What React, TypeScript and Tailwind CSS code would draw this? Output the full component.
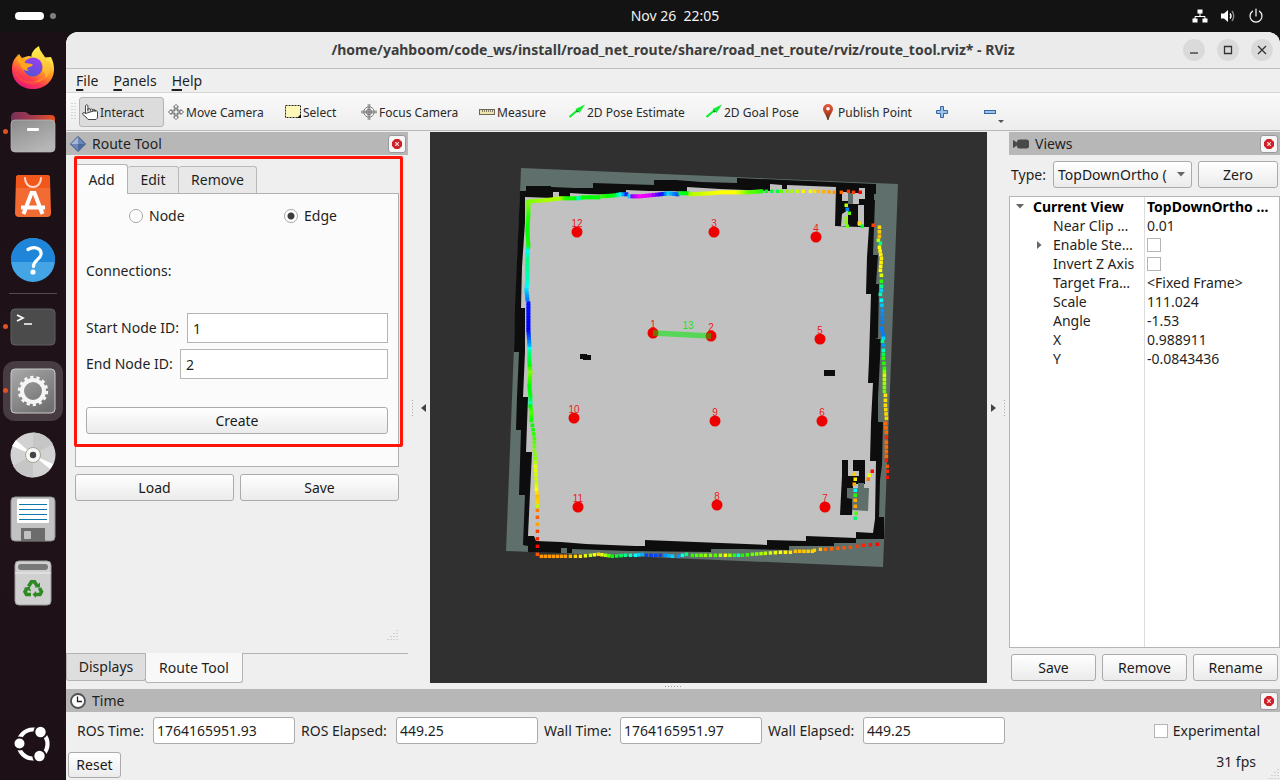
import React, { useState } from "react";

const btn =
  "rounded-[3px] border border-[#ababab] bg-gradient-to-b from-white to-[#ebebeb] text-center text-[#1a1a1a] active:from-[#ddd]";

/* ---------- Map data ---------- */

type Anchor = [number, number, number];

const scans: { step: number; size: number; pts: Anchor[] }[] = [
  {
    step: 3,
    size: 4,
    pts: [
      [528, 202, 100], [530, 201, 90], [545, 200, 80], [560, 198, 80], [565, 198, 110], [575, 198, 120], [578, 198, 170],
      [583, 197, 120], [598, 197, 120], [602, 196, 110], [615, 195, 130], [620, 194, 175], [626, 194, 230], [629, 196, 190],
      [632, 196, 275], [640, 196, 300], [650, 195, 290], [660, 194, 250], [668, 193, 190], [677, 194, 220], [680, 193, 130],
      [687, 193, 120], [690, 194, 80], [710, 193, 65], [720, 192, 60], [735, 192, 60], [748, 192, 95], [761, 191, 110],
    ],
  },
  {
    step: 5,
    size: 3.4,
    pts: [
      [766, 191, 130], [777, 191, 135], [781, 191, 95], [797, 191, 75], [803, 191, 58], [810, 191, 62], [818, 191, 45],
      [834, 192, 35], [841, 192, 25], [848, 191, 12], [853, 192, 14],
    ],
  },
  {
    step: 3,
    size: 4,
    pts: [
      [528, 203, 90], [528, 215, 110], [527, 230, 120], [528, 246, 115], [527, 251, 180], [527, 260, 150], [527, 280, 165],
      [526, 290, 190], [527, 299, 210], [528, 303, 235], [528, 330, 240], [529, 345, 200], [529, 352, 150], [529, 362, 130],
      [530, 372, 90], [529, 386, 120], [530, 396, 125], [530, 403, 160], [530, 406, 120], [531, 412, 100], [531, 420, 115],
    ],
  },
  {
    step: 4,
    size: 3.6,
    pts: [
      [532, 425, 120], [534, 438, 105], [534, 450, 90], [535, 458, 90], [535, 466, 65], [536, 482, 75], [536, 489, 60],
      [537, 496, 45], [537, 502, 50], [537, 506, 75],
    ],
  },
  {
    step: 7,
    size: 3.4,
    pts: [[537, 510, 30], [537, 517, 22], [537, 524, 38], [537, 531, 15], [537, 546, 2], [537, 554, 20]],
  },
  {
    step: 4.3,
    size: 3.5,
    pts: [
      [541, 556, 35], [565, 556, 38], [580, 556, 55], [590, 555, 75], [598, 554, 50], [605, 555, 80], [612, 556, 120],
      [625, 555, 155], [635, 555, 180], [642, 554, 200], [646, 555, 225], [660, 555, 225], [665, 555, 205], [672, 556, 190],
      [678, 556, 205], [686, 554, 150], [692, 555, 110], [705, 555, 85], [715, 555, 100], [725, 555, 60], [734, 555, 110],
      [738, 555, 170], [742, 555, 115], [752, 554, 95], [765, 553, 75], [780, 552, 60], [790, 552, 55], [795, 551, 45],
      [812, 551, 50],
    ],
  },
  {
    step: 6,
    size: 3.4,
    pts: [[814, 550, 48], [820, 549, 45], [825, 549, 25], [850, 547, 18], [863, 545, 8], [877, 544, 0]],
  },
  {
    step: 4.1,
    size: 3.6,
    pts: [
      [879, 227, 52], [879, 236, 45], [878, 240, 75], [880, 243, 150], [879, 247, 60], [881, 258, 55], [880, 270, 60],
      [881, 275, 70], [881, 281, 110], [881, 286, 150], [881, 290, 190], [880, 294, 165], [881, 300, 180], [882, 310, 205],
      [882, 322, 210], [881, 328, 210], [883, 335, 210], [883, 338, 190], [882, 341, 150], [883, 345, 205], [883, 350, 165],
      [883, 358, 110], [884, 368, 110], [884, 375, 70], [884, 391, 95], [885, 395, 55], [885, 405, 52], [886, 418, 50],
      [885, 423, 25], [886, 432, 25], [886, 437, 8], [886, 442, 25], [886, 456, 25],
    ],
  },
  { step: 6, size: 3.4, pts: [[886, 460, 6], [887, 466, 20], [887, 471, 10], [887, 477, 4]] },
];

const looseDots: Anchor[] = [
  [860, 192, 0], [846, 205, 75], [847, 209, 208], [849, 213, 100], [846, 218, 85], [846, 222, 90], [847, 226, 95],
  [859, 223, 52], [862, 226, 130], [873, 225, 15], [854, 474, 48], [855, 479, 55], [854, 484, 42], [855, 490, 180],
  [855, 495, 110], [855, 500, 42], [855, 506, 38], [856, 513, 105], [855, 518, 145], [872, 471, 2], [869, 475, 65],
  [868, 479, 28],
];

function sample(pts: Anchor[], step: number): Anchor[] {
  const out: Anchor[] = [];
  for (let i = 0; i < pts.length - 1; i++) {
    const [x0, y0, h0] = pts[i];
    const [x1, y1, h1] = pts[i + 1];
    const n = Math.max(1, Math.round(Math.hypot(x1 - x0, y1 - y0) / step));
    for (let k = 0; k < n; k++) {
      const t = k / n;
      out.push([x0 + (x1 - x0) * t, y0 + (y1 - y0) * t, h0 + (h1 - h0) * t]);
    }
  }
  out.push(pts[pts.length - 1]);
  return out;
}

const nodes = [
  { id: 12, x: 577, y: 232 }, { id: 3, x: 714, y: 232 }, { id: 4, x: 816, y: 237 }, { id: 1, x: 653, y: 333 },
  { id: 2, x: 711, y: 336 }, { id: 5, x: 820, y: 339 }, { id: 10, x: 574, y: 418 }, { id: 9, x: 715, y: 421 },
  { id: 6, x: 822, y: 421 }, { id: 11, x: 578, y: 507 }, { id: 8, x: 717, y: 505 }, { id: 7, x: 825, y: 507 },
];

function MapView() {
  return (
    <svg viewBox="430 132 557 551" className="min-h-0 w-full flex-1" role="img" aria-label="Map">
      <polygon points="521,168 898,184 883,567 506,551" fill="#5f6f6c" />
      <polygon
        fill="#0d0d0d"
        points="520,191 526,191 526,186 551,186 551,187 575,188 593,188 593,183 623,184 654,185 654,180 676,180 701,182 737,183 737,178 876,184 876,194 870,194 870,200 875,200 873,255 873,255 878,255 876,284 879,284 878,338 875,339 881,339 880,358 878,397 878,422 883,422 882,465 880,480 879,517 884,517 884,539 856,539 856,543 834,543 834,546 789,546 789,550 742,549 711,549 711,552 630,551 572,549 572,553 567,553 567,548 561,548 561,553 528,552 528,546 523,545 525,495 519,495 521,430 516,430 517,397 519,352 514,352 515,307"
      />
      <polygon
        fill="#c1c1c1"
        points="525,197 553,198 553,192 559,192 559,197 570,198 570,193 586,194 626,195 626,190 649,191 672,191 687,192 687,187 720,189 745,190 770,191 770,184 782,185 782,189 787,189 787,185 836,187 836,226 869,227 867,257 866,294 871,294 869,360 868,383 873,383 871,422 870,461 876,461 875,519 873,533 856,532 856,538 806,536 806,541 767,540 767,545 746,544 645,540 645,546 635,546 586,544 561,542 536,541 534,536 528,536 530,493 532,452 526,452 528,397 523,397 525,352 525,308 521,308 522,267 525,222"
      />
      <g fill="#0d0d0d">
        <polygon points="836,187 865,187 865,191 874,191 874,227 835,226" />
        <rect x="580" y="354" width="7" height="5" />
        <rect x="583" y="355" width="8" height="5" />
        <rect x="824" y="370" width="11" height="6" />
        <rect x="842" y="460" width="6" height="17" />
        <polygon points="842,476 853,476 853,500 852,515 840,515" />
        <rect x="853" y="460" width="12" height="24" />
      </g>
      <g fill="#c1c1c1">
        <rect x="842" y="192" width="6" height="9" />
        <rect x="848" y="200" width="5" height="4" />
        <rect x="853" y="193" width="6" height="11" />
        <rect x="859" y="188" width="6" height="11" />
        <polygon points="842,214 848,210 848,226 841,226" />
        <rect x="858" y="205" width="6" height="21" />
      </g>
      <rect x="848" y="193" width="5" height="11" fill="#5f6f6c" />
      <polygon points="847,488 858,488 858,483 864,483 864,488 869,488 868,511 852,510 852,499 847,498" fill="#5f6f6c" />
      <rect x="848" y="471" width="11" height="5" fill="#c1c1c1" />
      <path d="M848 460h5v11h-5z" fill="#c1c1c1" />
      {scans.map((s, i) => (
        <g key={i}>
          {sample(s.pts, s.step).map(([x, y, h], k) => (
            <rect key={k} x={x - s.size / 2 + 0.4} y={y - s.size / 2 + 0.3} width={s.size} height={s.size} fill={`hsl(${h} 100% 50%)`} />
          ))}
        </g>
      ))}
      {looseDots.map(([x, y, h], k) => (
        <rect key={k} x={x - 1.5} y={y - 1.5} width="3.500" height="3.500" fill={`hsl(${h} 100% 50%)`} />
      ))}
      {nodes.map((n) => (
        <circle key={n.id} cx={n.x} cy={n.y} r="5.500" fill="#ee0000" />
      ))}
      <line x1="653" y1="333" x2="711" y2="336" stroke="#10e610" strokeOpacity="0.6" strokeWidth="5.500" />
      <path d="M653 330.500h4.500v5.500h-4.500zM706 333h5v5.500h-5z" fill="#7a6a00" />
      <g className="font-['Liberation_Sans',sans-serif] text-[10px]" textAnchor="middle">
        {nodes.map((n) => (
          <text key={n.id} x={n.x} y={n.y - 5} fill="#f01818">
            {n.id}
          </text>
        ))}
        <text x="688" y="329" fill="#14e614">13</text>
      </g>
    </svg>
  );
}

/* ---------- Dock icons ---------- */

const Firefox = () => (
  <svg viewBox="0 0 44 46" className="h-[46px] w-11">
    <defs>
      <linearGradient id="ffa" x1="0.85" y1="0.05" x2="0.25" y2="1">
        <stop offset="0.1" stopColor="#ffe14a" />
        <stop offset="0.4" stopColor="#ff9a1f" />
        <stop offset="0.7" stopColor="#ff3d4f" />
        <stop offset="1" stopColor="#e5127c" />
      </linearGradient>
      <linearGradient id="ffb" x1="0.7" y1="0" x2="0.3" y2="1">
        <stop offset="0" stopColor="#9a3df0" />
        <stop offset="1" stopColor="#5255d4" />
      </linearGradient>
      <linearGradient id="ffc" x1="0.5" y1="0" x2="0.7" y2="1">
        <stop offset="0" stopColor="#fff04d" />
        <stop offset="1" stopColor="#ffa629" />
      </linearGradient>
    </defs>
    <path d="M8 9c1.500 2 2 3 3 4 3-1 5-2 7-2l8 2 14-1c2 4 3 8 3 12 0 12-9 20-21 20S1 36 1 24c0-6 2-10 5-13l1 3z" fill="url(#ffa)" />
    <path d="M28 1c-5 3-9 8-7 12 6-1 12 4 11 13 0 6-5 10-9 11 11 1 17-8 16-17 0-2-1-3-2-4l-1 2c-1-8-7-10-8-17z" fill="url(#ffc)" />
    <circle cx="22" cy="22" r="9.500" fill="url(#ffb)" />
    <path d="M7 9c2 4 5 5 9 5-3 1-3 3-2 4l7 1c2 0 0 3-3 3-3 1-2 3 0 4-5 0-8-3-9-7-3-3-4-6-2-10z" fill="#ffa51f" />
    <path d="M4 25c3 8 10 12 18 11 6-1 10-5 10-9 3 2 3 6 1 8-7 8-28 5-29-10z" fill="#ff5a30" opacity="0.550" />
  </svg>
);

const Files = () => (
  <svg viewBox="0 0 46 42" className="h-[42px] w-[46px]">
    <defs>
      <linearGradient id="fla" x1="0" x2="1">
        <stop offset="0" stopColor="#77305a" />
        <stop offset="0.500" stopColor="#a83a4d" />
        <stop offset="1" stopColor="#e95420" />
      </linearGradient>
      <linearGradient id="flb" x1="0" y1="0" x2="0.600" y2="1">
        <stop offset="0" stopColor="#8b8b8b" />
        <stop offset="1" stopColor="#b6b6b6" />
      </linearGradient>
    </defs>
    <path d="M1 6a5 5 0 0 1 5-5h9c2 0 3 3 6 3h20a4 4 0 0 1 4 4v10H1z" fill="url(#fla)" />
    <rect x="1" y="9" width="44" height="32" rx="4" fill="url(#flb)" stroke="#b9b9b9" strokeWidth="0.700" />
    <rect x="17" y="17" width="12" height="3" rx="1" fill="#fff" />
  </svg>
);

const Software = () => (
  <svg viewBox="0 0 36 42" className="h-[42px] w-9">
    <path d="M4 0h28a3 3 0 0 1 3 3l1 35a4 4 0 0 1-4 4H4a4 4 0 0 1-4-4L1 3a3 3 0 0 1 3-3z" fill="#f26b32" />
    <path d="M4 0h28a3 3 0 0 1 3 3v10H1V3a3 3 0 0 1 3-3z" fill="#f1571b" />
    <path d="M10 3c0 12 16 12 16 0" fill="none" stroke="#ffd9c8" strokeWidth="2" strokeLinecap="round" />
    <path d="M8.500 39l8-21h3l8 21M6 32.500h24" fill="none" stroke="#fff" strokeWidth="4" />
  </svg>
);

const Help = () => (
  <svg viewBox="0 0 44 44" className="size-11">
    <circle cx="22" cy="22" r="22" fill="#44a5e6" />
    <path d="M0 24a22 22 0 0 1 0-2 22 22 0 0 1 44 0v2z" fill="#1e85d9" />
    <path d="M17 11.500c6-3.500 14-1.500 13 5-1 5-7.500 6-7.500 12" fill="none" stroke="#fff" strokeWidth="3.200" strokeLinecap="round" />
    <circle cx="22" cy="34" r="2.600" fill="#fff" />
  </svg>
);

const Terminal = () => (
  <svg viewBox="0 0 46 38" className="h-[38px] w-[46px]">
    <rect x="1" y="1" width="44" height="36" rx="4" fill="#4b4b4b" stroke="#606060" />
    <path d="M7 7l6 3-6 3M14 16h8" fill="none" stroke="#fff" strokeWidth="1.700" />
  </svg>
);

const Settings = () => (
  <svg viewBox="0 0 46 46" className="size-[46px]">
    <defs>
      <linearGradient id="sta" x1="0" y1="0" x2="0.700" y2="1">
        <stop offset="0" stopColor="#aaaaaa" />
        <stop offset="1" stopColor="#707070" />
      </linearGradient>
    </defs>
    <rect x="1" y="1" width="44" height="44" rx="4" fill="url(#sta)" stroke="#c9c9c9" />
    <circle cx="23" cy="23" r="11" fill="none" stroke="#f5f5f5" strokeWidth="4" />
    <circle cx="23" cy="23" r="13.700" fill="none" stroke="#f5f5f5" strokeWidth="3" strokeDasharray="3.200 2.940" />
  </svg>
);

const Disc = () => (
  <svg viewBox="0 0 46 46" className="size-[46px]">
    <circle cx="23" cy="23" r="22.500" fill="#d2d2d2" />
    <path d="M23 23V.5A22.500 22.500 0 0 1 43 12zM23 23v22.500A22.500 22.500 0 0 1 3 34z" fill="#c6c6c6" />
    <path d="M23 23L2 14l4-6zM23 23l17 14 3-5z" fill="#fff" />
    <circle cx="23" cy="23" r="7.500" fill="#f7f7f7" stroke="#aaa28f" />
    <circle cx="23" cy="23" r="3.200" fill="#444" />
  </svg>
);

const Floppy = () => (
  <svg viewBox="0 0 46 46" className="size-[46px]">
    <rect x="1" y="1" width="44" height="44" rx="4" fill="#c2c2c2" stroke="#8f8f8f" />
    <rect x="7" y="3" width="32" height="24" rx="1" fill="#fff" />
    <path d="M9 8.500h28M9 13.500h28M9 18.500h28M9 23.500h28" stroke="#0d76ad" />
    <path d="M11 32h24v13H11z" fill="#6c6c6c" />
    <rect x="14" y="35" width="7" height="8" rx="1" fill="#c2c2c2" />
  </svg>
);

const Trash = () => (
  <svg viewBox="0 0 38 46" className="h-[46px] w-[38px]">
    <path d="M5 1h28a4 4 0 0 1 4 4v36a4 4 0 0 1-4 4H5a4 4 0 0 1-4-4V5a4 4 0 0 1 4-4z" fill="#d0d0d0" stroke="#9c9c9c" />
    <rect x="4" y="4" width="30" height="6" rx="3" fill="#797979" />
    <path d="M1 13h36" stroke="#eee" />
    <g fill="none" stroke="#2c8a22" strokeWidth="3.600">
      <path d="M14.500 26.500l3-4.800h3l2.500 4" />
      <path d="M25.500 28l2 3.800-1.500 2.700h-5" />
      <path d="M17 34.500h-4.500l-1.500-2.700 2-3.500" />
    </g>
    <g fill="#2c8a22">
      <path d="M20.500 27.500h5.500V22.500z" />
      <path d="M22 31v7l-3.500-3.500z" />
      <path d="M9.500 28l6-1.500 1.500 5z" />
    </g>
  </svg>
);

const UbuntuLogo = () => (
  <svg viewBox="0 0 40 40" className="size-10">
    <circle cx="20" cy="20" r="14.500" fill="none" stroke="#fff" strokeWidth="4.200" />
    <g fill="#fff" stroke="#1d1218" strokeWidth="2">
      <circle cx="6.500" cy="19.500" r="6" />
      <circle cx="27.500" cy="8" r="6.200" />
      <circle cx="26.500" cy="32" r="6.200" />
    </g>
  </svg>
);

const dockItems = [
  { name: "Firefox", icon: <Firefox /> },
  { name: "Files", icon: <Files />, running: true },
  { name: "App Center", icon: <Software /> },
  { name: "Help", icon: <Help /> },
  { name: "Terminal", icon: <Terminal />, running: true, divider: true },
  { name: "Settings", icon: <Settings />, running: true, active: true },
  { name: "Disc", icon: <Disc /> },
  { name: "Save", icon: <Floppy /> },
  { name: "Trash", icon: <Trash /> },
];

function Dock() {
  return (
    <nav className="flex w-[66px] shrink-0 flex-col bg-gradient-to-b from-[#1a1016] via-[#201219] to-[#1d1117] pt-1 pb-1" aria-label="Dock">
      {dockItems.map((d) => (
        <React.Fragment key={d.name}>
          {d.divider && <div className="mx-[9px] my-px h-px shrink-0 bg-[#55494f]" />}
          <button aria-label={d.name} className="relative flex h-16 w-full shrink-0 items-center justify-center">
            <span className={d.active ? "flex size-[60px] items-center justify-center rounded-xl bg-[#463c42]" : "flex"}>{d.icon}</span>
            {d.running && <span className="absolute top-[29px] left-[3px] size-[5px] rounded-full bg-[#e0521f]" />}
          </button>
        </React.Fragment>
      ))}
      <button aria-label="Show apps" className="mt-auto flex h-16 w-full shrink-0 items-center justify-center">
        <UbuntuLogo />
      </button>
    </nav>
  );
}

/* ---------- Toolbar ---------- */

const Hand = () => (
  <svg viewBox="0 0 16 16" className="size-4">
    <path
      d="M3.500 9.500V1.500q1.200-1.500 2.400 0V7.500M5.900 6V5q1.200-1 2.400 0v2.500M8.300 5.500q1.200-1 2.400 0v2M10.700 6q1.200-1 2.400 0v2M13.100 6.500q2-.3 2.400 1.500V13q0 1.500-1.500 2.500H6Q4.500 13 .800 10.500.300 8.500 2 8.500l1.500 1z"
      fill="#fff"
      stroke="#333"
      strokeWidth="0.900"
    />
  </svg>
);
const Move = () => (
  <svg viewBox="0 0 16 16" className="size-4">
    <path d="M8 .5l2.500 2.500H9v4h4V5.500L15.500 8 13 10.500V9H9v4h1.500L8 15.500 5.500 13H7V9H3v1.500L.5 8 3 5.500V7h4V3H5.500z" fill="#fff" stroke="#555" strokeWidth="0.900" />
    <circle cx="8" cy="8" r="3.500" fill="none" stroke="#777" strokeWidth="0.800" />
  </svg>
);
const SelectIcon = () => (
  <svg viewBox="0 0 16 16" className="size-4">
    <rect x="0.500" y="1.500" width="15" height="12" fill="#fdf7b8" stroke="#222" strokeDasharray="2 1" />
    <path d="M16 10v4h-4z" fill="#111" />
  </svg>
);
const Focus = () => (
  <svg viewBox="0 0 16 16" className="size-4">
    <g fill="none" stroke="#777" strokeWidth="0.900">
      <circle cx="8" cy="8" r="5.200" />
      <circle cx="8" cy="8" r="2.700" />
      <path d="M7.200 0v16M8.800 0v16M0 7.200h16M0 8.800h16" />
    </g>
  </svg>
);
const Ruler = () => (
  <svg viewBox="0 0 16 16" className="size-4">
    <rect x="0.500" y="5.500" width="15" height="5" fill="#ece3ae" stroke="#6b6857" />
    <path d="M3.500 6v2M5.500 6v2M7.500 6v2M9.500 6v2M11.500 6v2M13.500 6v2" stroke="#6b6857" strokeWidth="0.800" />
  </svg>
);
const Arrow = () => (
  <svg viewBox="0 0 16 16" className="size-4">
    <path d="M.5 13L10 5" stroke="#11ee33" strokeWidth="2.200" />
    <path d="M16 .5L6.500 5l4 4z" fill="#11ee33" />
    <path d="M7 6l3 1.500-2 1z" fill="#0a7a1a" />
  </svg>
);
const Pin = () => (
  <svg viewBox="0 0 16 16" className="size-4">
    <defs>
      <linearGradient id="pin" x1="0" y1="0" x2="0" y2="1">
        <stop offset="0" stopColor="#e4593c" />
        <stop offset="0.500" stopColor="#c24426" />
        <stop offset="1" stopColor="#4c3512" />
      </linearGradient>
    </defs>
    <path d="M8 0a5 5 0 0 1 5 5c0 3-3 5-4.500 11h-1C6 10 3 8 3 5a5 5 0 0 1 5-5z" fill="url(#pin)" />
    <circle cx="8" cy="4.800" r="1.800" fill="#fff" />
  </svg>
);

const tools = [
  { name: "Interact", icon: <Hand />, cls: "w-[85px] mr-px rounded-[3px] border border-[#b4b4b4] bg-[#dcdcdc] pl-[2px]" },
  { name: "Move Camera", icon: <Move />, cls: "w-[117px] pl-[3px]" },
  { name: "Select", icon: <SelectIcon />, cls: "w-[76px] pl-[3px]" },
  { name: "Focus Camera", icon: <Focus />, cls: "w-[118px] pl-[3px]" },
  { name: "Measure", icon: <Ruler />, cls: "w-[90px] pl-[3px]" },
  { name: "2D Pose Estimate", icon: <Arrow />, cls: "w-[137px] pl-[3px]" },
  { name: "2D Goal Pose", icon: <Arrow />, cls: "w-[114px] pl-[3px]" },
  { name: "Publish Point", icon: <Pin />, cls: "w-[113px] pl-[3px]" },
];

function Toolbar() {
  return (
    <div className="flex h-[38px] shrink-0 items-center border-b border-[#b9b9b9] bg-gradient-to-b from-[#fafafa] to-[#ededed] pl-[5px]">
      <svg viewBox="0 0 5 17" className="mr-[3px] h-[17px] w-[5px]" aria-hidden>
        <path d="M1 0v17M4 0v17" stroke="#b5b5b5" strokeDasharray="1 2" />
      </svg>
      {tools.map((t) => (
        <button key={t.name} className={`flex h-[30px] shrink-0 items-center gap-0.5 text-[12px] whitespace-nowrap text-[#2a2a2a] ${t.cls}`}>
          <span className="shrink-0">{t.icon}</span>
          <span className="pt-0.5">{t.name}</span>
        </button>
      ))}
      <button aria-label="Add tool" className="flex h-[30px] w-6 items-center justify-center">
        <svg viewBox="0 0 12 12" className="size-3">
          <path d="M4.500.5h3v4h4v3h-4v4h-3v-4h-4v-3h4z" fill="#9cc2ea" stroke="#3566a5" />
        </svg>
      </button>
      <button aria-label="Remove tool" className="ml-6 flex h-[30px] w-6 items-center justify-center">
        <svg viewBox="0 0 12 12" className="size-3">
          <rect x="0.500" y="4.500" width="11" height="3" fill="#9cc2ea" stroke="#3566a5" />
        </svg>
      </button>
      <svg viewBox="0 0 6 4" className="-ml-1 h-1 w-1.5 translate-y-2.5" aria-hidden>
        <path d="M0 0h6L3 3z" fill="#555" />
      </svg>
    </div>
  );
}

/* ---------- Panels ---------- */

function PanelHeader({ icon, title }: { icon: React.ReactNode; title: string }) {
  return (
    <header className="flex h-[23px] shrink-0 items-center gap-1.5 bg-[#b7b7b7] pr-[2px] pl-1">
      <span className="flex size-4 items-center justify-center">{icon}</span>
      <h2 className="flex-1 text-[#1f1f1f]">{title}</h2>
      <button aria-label={`Close ${title}`} className="flex size-[18px] items-center justify-center rounded-[3px] border border-[#9a9a9a] bg-[#f5f5f5]">
        <svg viewBox="0 0 10 10" className="size-2.5">
          <path d="M3 0h4l3 3v4l-3 3H3L0 7V3z" fill="#cf1f28" />
          <path d="M3.200 3.200l3.600 3.600M6.800 3.200L3.200 6.800" stroke="#f7dcdc" strokeWidth="1.200" />
        </svg>
      </button>
    </header>
  );
}

const Grip = () => (
  <svg viewBox="0 0 11 11" className="size-[11px]" aria-hidden>
    <path d="M10 0v11M7 3v8M4 6v5M1 9v2" stroke="#b5b5b5" strokeDasharray="1 2" />
  </svg>
);

const radioCls =
  "size-[14px] appearance-none rounded-full border border-[#a5a5a5] bg-white checked:bg-[radial-gradient(circle,#3c3c3c_3px,white_4px)]";
const checkCls = "block size-[14px] shrink-0 appearance-none border border-[#b5b5b5] bg-white checked:bg-[#555]";

function RouteToolPanel() {
  const [mode, setMode] = useState("Edge");
  return (
    <section className="flex w-[342px] shrink-0 flex-col">
      <PanelHeader
        title="Route Tool"
        icon={
          <svg viewBox="0 0 16 16" className="size-4">
            <path d="M8 .5L15.500 8 8 15.500.5 8z" fill="#6d88b8" stroke="#37507f" />
            <path d="M8 1L1 8h7z" fill="#a6b7d5" />
            <path d="M8 15V8h7z" fill="#4d6a9f" />
          </svg>
        }
      />
      <div className="relative px-[9px] pt-[9px]">
        <div className="flex items-end" role="tablist">
          <button role="tab" aria-selected="true" className="relative z-10 -mb-px h-[30px] w-[53px] rounded-t-[3px] border border-b-0 border-[#b4b4b4] bg-[#fcfcfc]">
            Add
          </button>
          <button role="tab" aria-selected="false" className="h-[27px] w-[51px] rounded-t-[3px] border border-b-0 border-l-0 border-[#b9b9b9] bg-[#e8e8e8]">
            Edit
          </button>
          <button role="tab" aria-selected="false" className="h-[27px] w-[78px] rounded-t-[3px] border border-b-0 border-l-0 border-[#b9b9b9] bg-[#e8e8e8]">
            Remove
          </button>
        </div>
        <div className="flex flex-col border border-[#b0b0b0] bg-[#fbfbfb] px-2.5 pt-3 pb-8">
          <div className="grid h-5 grid-cols-[155px_1fr] items-center pl-[43px]">
            {["Node", "Edge"].map((m) => (
              <label key={m} className="flex items-center gap-1.5">
                <input type="radio" name="mode" className={radioCls} checked={mode === m} onChange={() => setMode(m)} />
                {m}
              </label>
            ))}
          </div>
          <p className="mt-[35px] h-5">Connections:</p>
          <div className="mt-8 flex h-[30px] items-center gap-1.5">
            <label htmlFor="start" className="w-[95px] shrink-0 whitespace-nowrap">Start Node ID:</label>
            <input id="start" defaultValue="1" className="h-full min-w-0 flex-1 border border-[#b5b5b5] bg-white px-[5px]" />
          </div>
          <div className="mt-1.5 flex h-[30px] items-center gap-1.5">
            <label htmlFor="end" className="w-[88px] shrink-0 whitespace-nowrap">End Node ID:</label>
            <input id="end" defaultValue="2" className="h-full min-w-0 flex-1 border border-[#b5b5b5] bg-white px-[5px]" />
          </div>
          <button className={`mt-7 h-[27px] ${btn}`}>Create</button>
        </div>
        <div className="mt-[7px] grid grid-cols-2 gap-1.5">
          <button className={`h-[27px] ${btn}`}>Load</button>
          <button className={`h-[27px] ${btn}`}>Save</button>
        </div>
        <div className="pointer-events-none absolute top-[1px] left-2 z-20 h-[291px] w-[329px] rounded-[2px] border-[3px] border-[#ff1408]" />
      </div>
      <div className="mt-auto mr-2.5 mb-3 flex justify-end">
        <Grip />
      </div>
      <div className="flex h-[30px] items-start border-t border-[#b4b4b4]" role="tablist">
        <button role="tab" aria-selected="false" className="h-[27px] w-20 rounded-b-[3px] border border-t-0 border-[#b4b4b4] bg-[#dedede]">
          Displays
        </button>
        <button role="tab" aria-selected="true" className="-mt-px -ml-px h-[30px] w-[98px] rounded-b-[3px] border border-t-0 border-[#b4b4b4] bg-[#f8f8f8]">
          Route Tool
        </button>
      </div>
    </section>
  );
}

const rows: { name: string; value?: string; check?: boolean; expand?: boolean }[] = [
  { name: "Near Clip …", value: "0.01" },
  { name: "Enable Ste…", check: true, expand: true },
  { name: "Invert Z Axis", check: true },
  { name: "Target Fra…", value: "<Fixed Frame>" },
  { name: "Scale", value: "111.024" },
  { name: "Angle", value: "-1.53" },
  { name: "X", value: "0.988911" },
  { name: "Y", value: "-0.0843436" },
];

function ViewsPanel() {
  return (
    <section className="flex w-[271px] shrink-0 flex-col">
      <PanelHeader
        title="Views"
        icon={
          <svg viewBox="0 0 16 10" className="h-2.5 w-4">
            <path d="M0 1l4 2.500V3q0-2.500 2.500-2.500h7Q16 .5 16 3v4q0 2.500-2.500 2.500h-7Q4 9.500 4 7v-.5L0 9z" fill="#484848" />
          </svg>
        }
      />
      <div className="mt-1.5 mr-0.5 flex h-[27px] items-center pl-[2px]">
        <label htmlFor="type" className="w-[42px]">Type:</label>
        <span className="relative flex h-full">
          <select id="type" className={`h-full w-[139px] appearance-none overflow-hidden pl-1 !text-left ${btn}`}>
            <option>TopDownOrtho (</option>
          </select>
          <svg viewBox="0 0 8 5" className="pointer-events-none absolute top-[11px] right-[7px] h-[5px] w-2">
            <path d="M0 0h8L4 4.500z" fill="#666" />
          </svg>
        </span>
        <button className={`ml-1.5 h-full flex-1 ${btn}`}>Zero</button>
      </div>
      <div className="mt-2 flex flex-1 border border-[#b5b5b5] bg-[linear-gradient(#dcdcdc,#dcdcdc)] bg-[length:1px_100%] bg-[position:134px_0] bg-no-repeat bg-white">
        <table className="h-fit w-full table-fixed border-collapse">
          <thead>
            <tr className="h-[19px] text-left leading-[19px] font-bold text-black">
              <th className="w-[135px] p-0">
                <span className="flex items-center pl-1.5">
                  <svg viewBox="0 0 8 5" className="mr-[9px] h-[5px] w-2">
                    <path d="M0 0h8L4 4.500z" fill="#666" />
                  </svg>
                  Current View
                </span>
              </th>
              <th className="p-0 pl-0.5 whitespace-nowrap">TopDownOrtho …</th>
            </tr>
          </thead>
          <tbody>
            {rows.map((r) => (
              <tr key={r.name} className="h-[19px] leading-[19px]">
                <td className="p-0">
                  <span className="flex items-center whitespace-nowrap">
                    <span className="flex w-[43px] pl-[27px]">
                      {r.expand && (
                        <svg viewBox="0 0 5 8" className="h-2 w-[5px]">
                          <path d="M0 0v8l4.500-4z" fill="#666" />
                        </svg>
                      )}
                    </span>
                    {r.name}
                  </span>
                </td>
                <td className="p-0 pl-0.5">
                  {r.check ? <input type="checkbox" aria-label={r.name} className={checkCls} /> : r.value}
                </td>
              </tr>
            ))}
          </tbody>
        </table>
      </div>
      <div className="mt-1.5 mb-[2px] grid h-[27px] grid-cols-3 gap-1.5 pr-[2px] pl-[2px]">
        <button className={btn}>Save</button>
        <button className={btn}>Remove</button>
        <button className={btn}>Rename</button>
      </div>
    </section>
  );
}

function Splitter({ dir }: { dir: "left" | "right" }) {
  return (
    <div className="flex w-[22px] shrink-0 items-center justify-center gap-2">
      {dir === "right" && (
        <svg viewBox="0 0 5 8" className="h-2 w-[5px]"><path d="M0 0v8l5-4z" fill="#444" /></svg>
      )}
      <svg viewBox="0 0 1 16" className="h-4 w-px"><path d="M.5 0v16" stroke="#aaa" strokeDasharray="1 2" /></svg>
      {dir === "left" && (
        <svg viewBox="0 0 5 8" className="h-2 w-[5px]"><path d="M5 0v8L0 4z" fill="#444" /></svg>
      )}
    </div>
  );
}

const times = [
  { label: "ROS Time:", value: "1764165951.93", w: "w-[76px]" },
  { label: "ROS Elapsed:", value: "449.25", w: "w-[95px]" },
  { label: "Wall Time:", value: "1764165951.97", w: "w-[76px]" },
  { label: "Wall Elapsed:", value: "449.25", w: "w-[95px]" },
];

function TimePanel() {
  return (
    <section className="shrink-0">
      <PanelHeader
        title="Time"
        icon={
          <svg viewBox="0 0 16 16" className="size-4">
            <circle cx="8" cy="8" r="7" fill="#fff" stroke="#505050" strokeWidth="1.800" />
            <path d="M7.500 3.500V8.500H12" fill="none" stroke="#222" strokeWidth="1.300" />
          </svg>
        }
      />
      <div className="mt-[5px] flex h-[27px] items-center gap-1.5 pr-5 pl-[11px]">
        {times.map((t) => (
          <label key={t.label} className="flex h-full items-center whitespace-nowrap">
            <span className={t.w}>{t.label}</span>
            <input defaultValue={t.value} className="h-full w-[142px] rounded-[3px] border border-[#ababab] bg-white px-[3px]" />
          </label>
        ))}
        <label className="ml-auto flex items-center gap-[5px]">
          <input type="checkbox" className={checkCls} />
          Experimental
        </label>
      </div>
      <div className="mt-2 flex h-[28px] items-start pl-[2px]">
        <button className={`h-[26px] w-[53px] ${btn}`}>Reset</button>
        <span className="mr-1 ml-auto">31 fps</span>
        <span className="mt-4 mr-px ml-2 self-end">
          <Grip />
        </span>
      </div>
    </section>
  );
}

export default function App() {
  return (
    <div className="flex h-screen min-h-[700px] flex-col bg-[#131313] font-['Noto_Sans','Open_Sans',sans-serif] text-sm text-[#1f1f1f]">
      <div className="flex h-8 shrink-0 items-center text-[#f2f2f2]">
        <span className="flex w-[66px] items-center gap-1.5 pl-[15px]">
          <span className="h-2 w-[29px] rounded-full bg-white" />
          <span className="size-1.5 rounded-full bg-[#808080]" />
        </span>
        <span className="flex-1 pl-[92px] text-center whitespace-pre">{"Nov 26  22:05"}</span>
        <span className="flex items-center justify-end gap-3 pr-4">
          <svg viewBox="0 0 16 16" className="size-4" aria-label="Network">
            <path d="M5.500 1.500h5v4h-5zM.5 10.500h5v4h-5zM10.500 10.500h5v4h-5z" fill="#fff" />
            <path d="M8 5v3M3 11V8.500h10V11" fill="none" stroke="#fff" />
          </svg>
          <svg viewBox="0 0 16 16" className="size-4" aria-label="Volume">
            <path d="M1 5.500h3L8 2v12l-4-3.500H1z" fill="#fff" />
            <path d="M10 5.500q2 2.500 0 5" fill="none" stroke="#fff" strokeWidth="1.400" />
            <path d="M12 3q3.500 5 0 10" fill="none" stroke="#888" strokeWidth="1.400" />
          </svg>
          <svg viewBox="0 0 16 16" className="size-4" aria-label="Power">
            <path d="M4.500 3.200a6 6 0 1 0 7 0M8 1v7" fill="none" stroke="#fff" strokeWidth="1.200" strokeLinecap="round" />
          </svg>
        </span>
      </div>
      <div className="flex min-h-0 flex-1">
        <Dock />
        <main className="flex min-w-0 flex-1 flex-col rounded-t-xl bg-[#efefef]">
          <div className="flex h-[37px] shrink-0 items-center rounded-t-xl border-b border-[#bdbdbd] bg-[#ebebeb] pr-[7px] pl-[97px]">
            <h1 className="flex-1 text-center font-bold whitespace-nowrap text-[#3d3d3d]">
              /home/yahboom/code_ws/install/road_net_route/share/road_net_route/rviz/route_tool.rviz* - RViz
            </h1>
            <div className="flex gap-3">
              {["M7 14h8", "M7.500 7.500h7v7h-7z", "M7 7l8 8M15 7l-8 8"].map((d, i) => (
                <button key={d} aria-label={["Minimize", "Maximize", "Close"][i]} className="size-[22px] rounded-full bg-[#dadada]">
                  <svg viewBox="0 0 22 22" className="size-[22px]">
                    <path d={d} fill="none" stroke="#333" strokeWidth="1.300" />
                  </svg>
                </button>
              ))}
            </div>
          </div>
          <div className="flex h-6 shrink-0 items-center gap-[15px] border-b border-[#d6d6d6] pl-2.5">
            {["File", "Panels", "Help"].map((m) => (
              <button key={m} className="whitespace-nowrap">
                <span className="underline decoration-2 underline-offset-[3px]">{m[0]}</span>
                {m.slice(1)}
              </button>
            ))}
          </div>
          <Toolbar />
          <div className="flex min-h-0 flex-1 pt-px">
            <RouteToolPanel />
            <Splitter dir="left" />
            <div className="flex min-w-0 flex-1 flex-col bg-[#303030]">
              <MapView />
            </div>
            <Splitter dir="right" />
            <ViewsPanel />
          </div>
          <div className="flex h-1.5 shrink-0 items-center justify-center">
            <svg viewBox="0 0 16 1" className="h-px w-4"><path d="M0 .5h16" stroke="#999" strokeDasharray="1 2" /></svg>
          </div>
          <TimePanel />
        </main>
      </div>
    </div>
  );
}
